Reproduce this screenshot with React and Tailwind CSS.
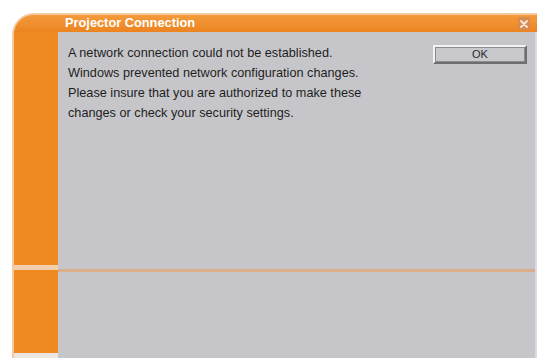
import React from "react";

const lines = [
  "A network connection could not be established.",
  "Windows prevented network configuration changes.",
  "Please insure that you are authorized to make these",
  "changes or check your security settings.",
];

export default function App() {
  return (
    <div className="w-[540px] h-[362px] bg-white pl-[12px] pt-[13px] overflow-hidden font-['Liberation_Sans',Arial,sans-serif]">
      <div className="w-[525px] h-[345px] flex flex-col rounded-tl-[22px] overflow-hidden bg-[#ef8a22] border-l-2 border-t-2 border-[#f5c9a0]">
        {/* title bar */}
        <div className="h-[17px] flex items-center justify-between pl-[51px] pr-[7px] bg-gradient-to-b from-[#f39a3c] to-[#ec8420]">
          <span className="text-white font-bold text-[12.8px] leading-none">
            Projector Connection
          </span>
          <div className="w-[12px] h-[13px] bg-[#d98a4e] flex items-center justify-center">
            <svg width="8" height="8" viewBox="0 0 8 8">
              <path d="M1 1L7 7M7 1L1 7" stroke="#f7e8da" strokeWidth="1.8" strokeLinecap="round" />
            </svg>
          </div>
        </div>

        <div className="flex flex-1">
          {/* left orange column */}
          <div className="w-[44px] flex flex-col">
            <div className="h-[233px] bg-[#ef8a22]" />
            <div className="h-[5px] bg-[#f3cfae]" />
            <div className="h-[83px] bg-[#ef8a22] rounded-b-[2px]" />
            <div className="flex-1 bg-[#ebe6e1]" />
          </div>

          {/* content */}
          <div className="flex-1 flex flex-col bg-[#c6c6ca] border-r-2 border-[#dadade]">
            <div className="h-[237px] flex justify-between pl-[10px] pr-[8px] pt-[11px]">
              <div className="text-[12.7px] leading-[20px] text-[#1e1e1e] whitespace-nowrap">
                {lines.map((l) => (
                  <div key={l}>{l}</div>
                ))}
              </div>
              <button className="mt-[2px] w-[94px] h-[19px] bg-[#c9c9cd] border-t-2 border-l-2 border-[#f2f2f4] border-b-2 border-r-2 border-b-[#6e6e72] border-r-[#6e6e72] flex items-center justify-center">
                <span className="w-full h-full border border-[#8c8c90] flex items-center justify-center text-[11px] leading-none text-[#2a2a2a]">
                  OK
                </span>
              </button>
            </div>
            <div className="h-[3px] bg-[#d9ae8a]" />
            <div className="flex-1" />
          </div>
        </div>
      </div>
    </div>
  );
}
